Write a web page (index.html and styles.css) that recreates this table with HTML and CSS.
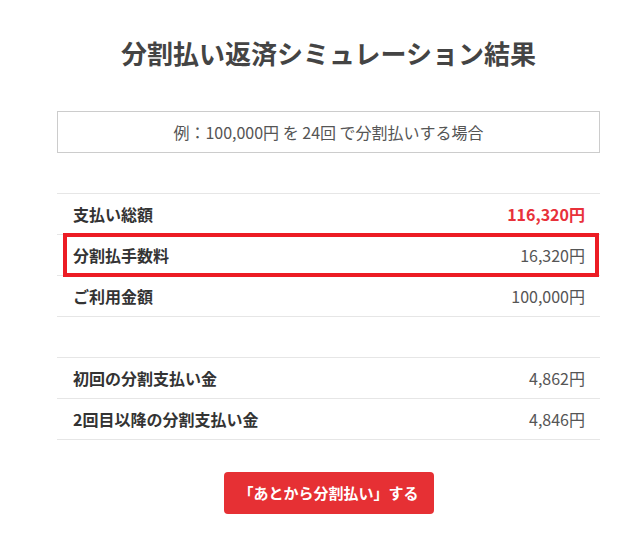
FILE: index.html
```html
<!DOCTYPE html>
<html lang="ja">
  <head>
    <meta charset="UTF-8" />
    <meta name="viewport" content="width=device-width, initial-scale=1.0" />
    <title>分割払い返済シミュレーション結果</title>
    <link rel="stylesheet" href="styles.css">
  </head>
  <body>
    <main class="result">
      <h1 class="result-title">分割払い返済シミュレーション結果</h1>

      <p class="example">例：100,000円 を 24回 で分割払いする場合</p>

      <dl class="summary">
        <div class="row">
          <dt>支払い総額</dt>
          <dd class="total">116,320円</dd>
        </div>
        <div class="row highlight">
          <dt>分割払手数料</dt>
          <dd>16,320円</dd>
        </div>
        <div class="row">
          <dt>ご利用金額</dt>
          <dd>100,000円</dd>
        </div>
      </dl>

      <dl class="summary">
        <div class="row">
          <dt>初回の分割支払い金</dt>
          <dd>4,862円</dd>
        </div>
        <div class="row">
          <dt>2回目以降の分割支払い金</dt>
          <dd>4,846円</dd>
        </div>
      </dl>

      <div class="action">
        <a href="#" class="btn">「あとから分割払い」する</a>
      </div>
    </main>
  </body>
</html>
```

FILE: styles.css
```css
body {
  margin: 0;
  font-family: "Noto Sans CJK JP", "Noto Sans", sans-serif;
  color: #333;
  background: #fff;
}
.result {
  padding: 35px 40px 20px 57px;
}
.result-title {
  margin: 0;
  font-size: 26px;
  line-height: 36px;
  font-weight: bold;
  color: #444;
  text-align: center;
}
.example {
  margin: 40px 0 0;
  border: 1px solid #ccc;
  line-height: 40px;
  font-size: 16px;
  color: #555;
  text-align: center;
}
.summary {
  margin: 40px 0 0;
  border-bottom: 1px solid #e6e6e6;
}
.row {
  position: relative;
  display: flex;
  justify-content: space-between;
  align-items: center;
  height: 40px;
  padding: 0 15px 0 16px;
  border-top: 1px solid #e6e6e6;
}
.row dt {
  font-size: 16px;
  font-weight: bold;
  color: #333;
}
.row dd {
  margin: 0;
  font-size: 16px;
  color: #555;
}
.row dd.total {
  font-weight: bold;
  color: #e8313a;
}
.highlight::after {
  content: "";
  position: absolute;
  z-index: 1;
  left: 6px;
  right: 1px;
  top: -2px;
  bottom: -2px;
  border: 4px solid #ec1c24;
}
.action {
  margin-top: 32px;
  display: flex;
  justify-content: center;
}
.btn {
  display: block;
  width: 210px;
  line-height: 42px;
  border-radius: 4px;
  background: #e63034;
  color: #fff;
  font-size: 15px;
  font-weight: bold;
  text-align: center;
  text-decoration: none;
}
```
